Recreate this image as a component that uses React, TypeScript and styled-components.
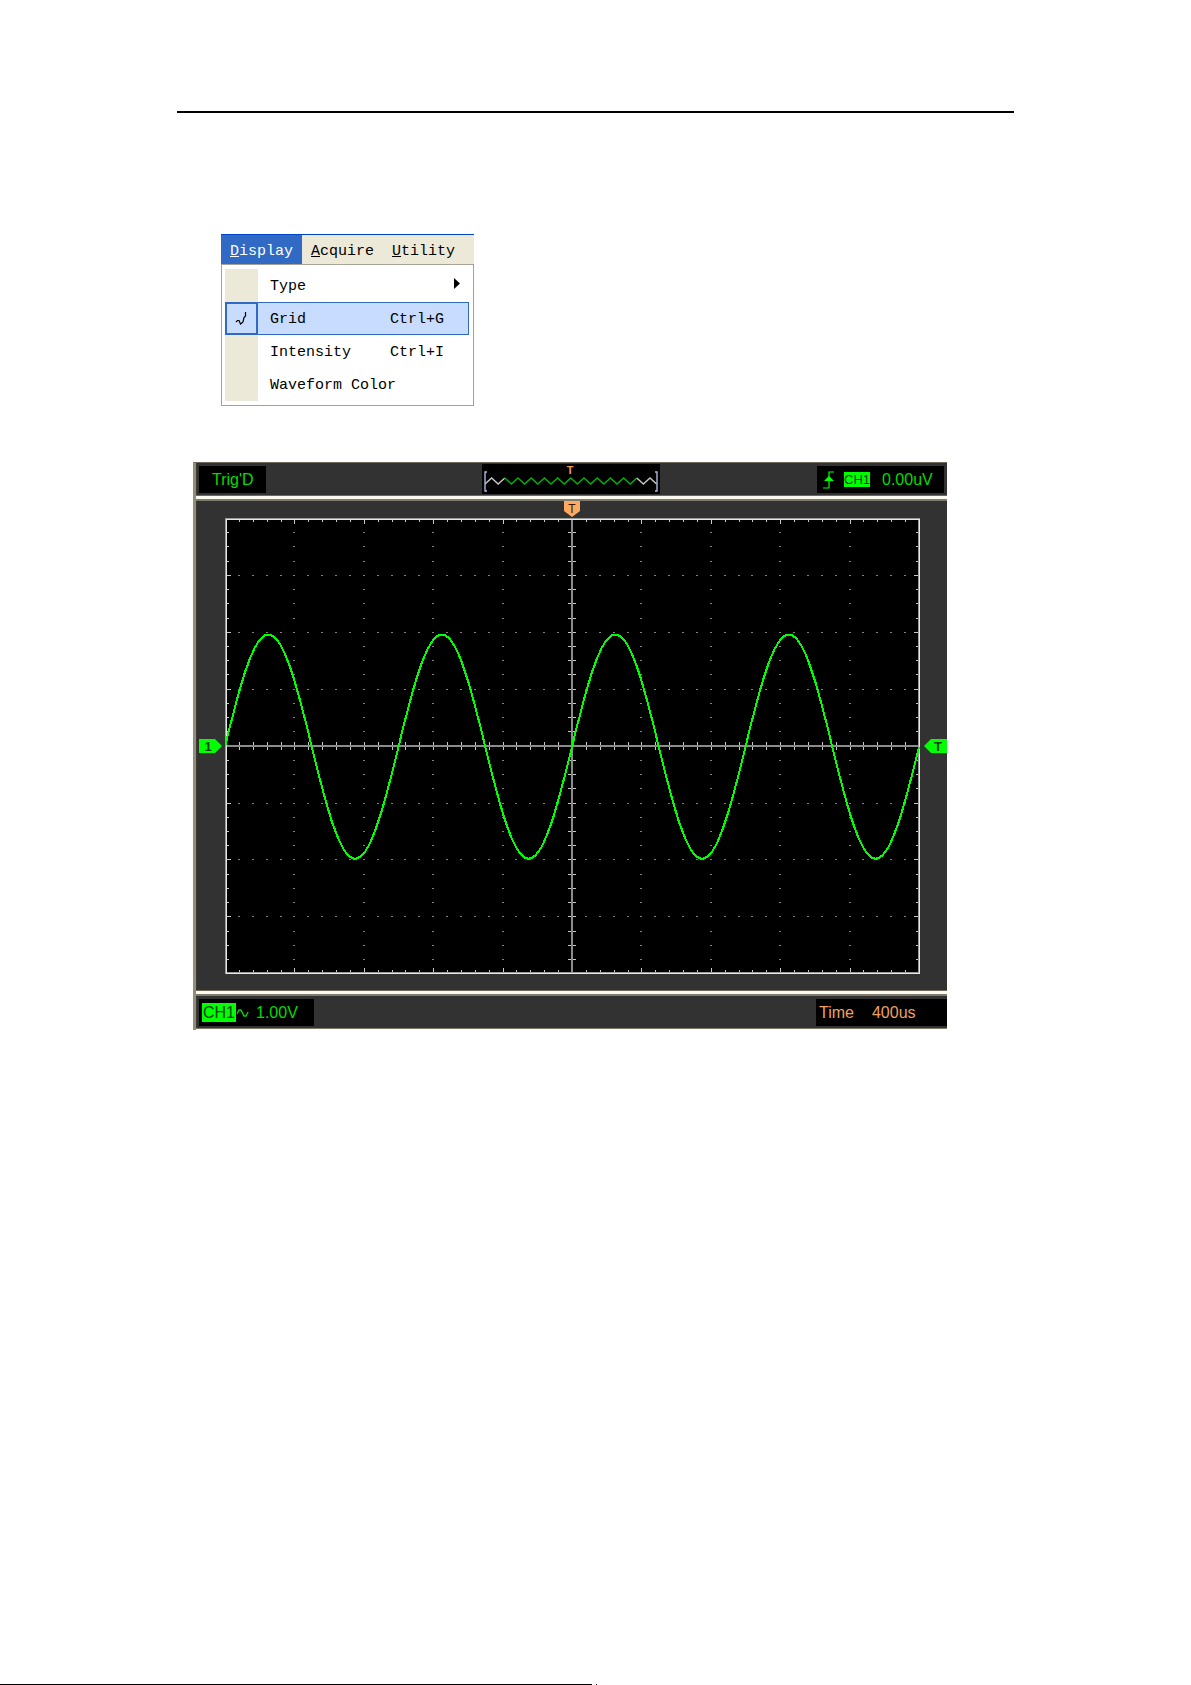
import React from "react";
import styled, { createGlobalStyle, css } from "styled-components";

const GlobalStyle = createGlobalStyle`
  * {
    box-sizing: border-box;
  }
  body {
    margin: 0;
    background: #fff;
    font-family: "Liberation Sans", Arial, sans-serif;
  }
`;

const GREEN = "#00ff00";
const ORANGE = "#ffa860";

const Page = styled.div`
  min-height: 100vh;
  display: flex;
  flex-direction: column;
`;

const Content = styled.main`
  padding: 111px 177px 0 177px;
`;

const Rule = styled.hr`
  margin: 0;
  border: 0;
  height: 2px;
  background: #000;
`;

const Footer = styled.footer`
  margin-top: auto;
  display: flex;
  gap: 4px;
`;

const FooterLine = styled.div`
  width: calc(50% - 4px);
  height: 1px;
  background: #000;
`;

const FooterDot = styled.div`
  width: 1px;
  height: 1px;
  background: #401018;
`;

/* ---------- menu ---------- */

const Menu = styled.nav`
  width: 253px;
  margin: 121px 0 0 44px;
`;

const MenuBar = styled.div`
  display: flex;
  height: 30px;
  border-top: 1px solid #0046c8;
  background: #ece9d8;
`;

const MenuButton = styled.button<{ $active?: boolean }>`
  border: 0;
  padding: 4px 9px 0 9px;
  background: ${(props) => (props.$active ? "#316ac5" : "transparent")};
  color: ${(props) => (props.$active ? "#fff" : "#000")};
  font: 15px "Liberation Mono", monospace;
`;

const Dropdown = styled.div`
  border: 1px solid #a5a294;
  padding: 4px 4px 4px 3px;
  background: #fff;
`;

const MenuRow = styled.button<{ $selected?: boolean }>`
  display: grid;
  grid-template-columns: 33px 1fr 79px;
  align-items: center;
  width: 100%;
  height: 33px;
  border: 0;
  padding: 0;
  background: transparent;
  color: #000;
  font: 15px "Liberation Mono", monospace;
  text-align: left;
  white-space: nowrap;
  ${(props) =>
    props.$selected &&
    css`
      background: #c8dcff;
      box-shadow: inset 0 0 0 1px #316ac5;
    `};
`;

const IconCell = styled.span<{ $selected?: boolean }>`
  display: flex;
  align-items: center;
  justify-content: center;
  height: 33px;
  background: #ece9d8;
  ${(props) =>
    props.$selected &&
    css`
      background: #c8dcff;
      border: 2px solid #316ac5;
    `};
`;

const RowLabel = styled.span`
  padding: 2px 0 0 12px;
`;

const Shortcut = styled.span`
  padding-top: 2px;
`;

const SubArrow = styled.span`
  display: flex;
  padding: 0 9px 4px 0;
  justify-content: flex-end;
`;

type menuRowType = {
  label: string;
  shortcut?: string;
  checked?: boolean;
  submenu?: boolean;
};

const menus = ["Display", "Acquire", "Utility"];

const rows: menuRowType[] = [
  { label: "Type", submenu: true },
  { label: "Grid", shortcut: "Ctrl+G", checked: true },
  { label: "Intensity", shortcut: "Ctrl+I" },
  { label: "Waveform Color" },
];

const DisplayMenu: React.FC = () => (
  <Menu>
    <MenuBar>
      {menus.map((name, i) => (
        <MenuButton key={name} $active={i === 0}>
          <u>{name[0]}</u>
          {name.slice(1)}
        </MenuButton>
      ))}
    </MenuBar>
    <Dropdown>
      {rows.map((row) => (
        <MenuRow key={row.label} $selected={row.checked}>
          <IconCell $selected={row.checked}>
            {row.checked && (
              <svg width="14" height="16" viewBox="0 0 14 16">
                <path
                  d="M1 11L2.5 9.5H4L5.5 13L8 11L9 6.5L10.5 5V1"
                  fill="none"
                  stroke="#000"
                  strokeWidth="1.2"
                />
              </svg>
            )}
          </IconCell>
          <RowLabel>{row.label}</RowLabel>
          {row.submenu ? (
            <SubArrow>
              <svg width="6" height="11" viewBox="0 0 6 11">
                <path d="M0 0 L6 5.5 L0 11 Z" fill="#000" />
              </svg>
            </SubArrow>
          ) : (
            <Shortcut>{row.shortcut}</Shortcut>
          )}
        </MenuRow>
      ))}
    </Dropdown>
  </Menu>
);

/* ---------- oscilloscope ---------- */

const Scope = styled.section`
  margin: 56px 67px 0 16px;
  border-left: 3px solid #918d7c;
  border-top: 1px solid #6e6b5d;
  background: #323232;
`;

const Divider = styled.div`
  height: 6px;
  border-top: 1px solid #6e6b5d;
  border-bottom: 2px solid #7f7b6c;
  background: #fbfaf0;
`;

const BottomEdge = styled.div`
  height: 2px;
  border-top: 1px solid #807c6c;
  background: #fbfaf0;
`;

const Bar = styled.div`
  display: grid;
  grid-template-columns: 1fr auto 1fr;
  align-items: center;
  height: 32px;
  padding-left: 2px;
  border-left: 1px solid #3f3c34;
`;

const Readout = styled.div<{ $color: string; $width: number; $end?: boolean }>`
  display: flex;
  align-items: center;
  width: ${(props) => props.$width}px;
  height: 27px;
  padding-top: 1px;
  background: #000;
  color: ${(props) => props.$color};
  font-size: 16px;
  white-space: nowrap;
  ${(props) =>
    props.$end &&
    css`
      grid-column: 3;
      justify-self: end;
    `};
`;

const Value = styled.span`
  padding-top: 1px;
`;

const TrigState = styled(Value)`
  padding-left: 13px;
`;

const TriggerReadout = styled(Readout)`
  margin-right: 3px;
  padding-left: 6px;
  gap: 10px;
`;

const ChannelReadout = styled(Readout)`
  padding-left: 3px;
`;

const TimeReadout = styled(Readout)`
  padding-left: 3px;
  gap: 18px;
`;

const ChannelTag = styled.span<{ $small?: boolean }>`
  padding: 0 1px;
  background: ${GREEN};
  color: #003c00;
  font-size: ${(props) => (props.$small ? 13 : 16)}px;
  line-height: ${(props) => (props.$small ? 15 : 19)}px;
  ${(props) =>
    props.$small &&
    css`
      padding: 0;
      margin-right: 2px;
    `};
`;

const Coupling = styled.svg`
  margin-right: 7px;
`;

const Preview = styled.svg`
  display: block;
  height: 30px;
  margin-right: 4px;
  background: #000;
`;

const Screen = styled.div`
  display: grid;
  grid-template-columns: 28px 1fr 27px;
  grid-template-rows: 17px auto 16px;
  align-items: center;
  border-left: 1px solid #3f3c34;

  svg {
    display: block;
  }
`;

const TriggerPosition = styled.svg`
  grid-column: 2;
  grid-row: 1;
  justify-self: center;
  margin-right: 2px;
`;

const ChannelMarker = styled.svg`
  grid-column: 1;
  grid-row: 2;
  margin-left: 2px;
`;

const LevelMarker = styled.svg`
  grid-column: 3;
  grid-row: 2;
  justify-self: end;
`;

const Plot = styled.svg`
  grid-column: 2;
  grid-row: 2;
  width: 100%;
  height: auto;
`;

// plot geometry: 10 x 8 divisions
const W = 695;
const H = 456;
const DIV_X = 69.4;
const DIV_Y = 56.9;
const CX = DIV_X * 5;
const CY = DIV_Y * 4;

const range = (n: number) => Array.from({ length: n }, (_, i) => i);

const gridX = range(51).map((i) => Math.round((i * DIV_X) / 5));
const gridY = range(33).map((i) => Math.round((i * DIV_Y) / 4));

const Graticule: React.FC = () => {
  const ticks: string[] = [];
  const dots: string[] = [];
  const cx = Math.round(CX);
  const cy = Math.round(CY);

  gridX.forEach((x, i) => {
    const len = i % 5 === 0 ? 6 : 4;
    ticks.push(`M${x} 0v${len}M${x} ${H}v${-len}M${x} ${cy - 4}v8`);
    if (i % 5 !== 0) {
      range(9).forEach((r) => dots.push(`M${x - 1} ${gridY[r * 4]}h2`));
    }
  });
  gridY.forEach((y, i) => {
    const len = i % 4 === 0 ? 6 : 4;
    ticks.push(`M0 ${y}h${len}M${W} ${y}h${-len}M${cx - 4} ${y}h8`);
    range(11).forEach((c) => dots.push(`M${gridX[c * 5] - 1} ${y}h2`));
  });

  return (
    <g fill="none" shapeRendering="crispEdges">
      <path d={dots.join("")} stroke="#808080" strokeWidth="1" />
      <path d={ticks.join("")} stroke="#c8c8c8" strokeWidth="1" />
      <path d={`M${cx} 0V${H}M0 ${cy}H${W}`} stroke="#8c8c8c" strokeWidth="2" />
      <rect x="1" y="1" width={W - 2} height={H - 2} stroke="#9a9a9a" strokeWidth="2" />
      <path d={`M1 ${H - 1}V1H${W - 1}V${H - 1}Z`} stroke="#e8e8e8" strokeWidth="1" />
    </g>
  );
};

const wave = range(W)
  .map((x) => {
    const y = CY + 1 - 112 * Math.sin((x / (DIV_X * 2.5)) * 2 * Math.PI);
    return `${x === 0 ? "M" : "L"}${x} ${Math.round(y)}`;
  })
  .join("");

const zigzag = (from: number, to: number) =>
  range(27)
    .map((i) => [3 + i * 6.6, i % 2 ? 14 : 20])
    .filter(([x]) => x >= from && x <= to)
    .map(([x, y], i) => `${i ? "L" : "M"}${x} ${y}`)
    .join("");

const App: React.FC = () => {
  return (
    <Page>
      <GlobalStyle />
      <Content>
        <Rule />
        <DisplayMenu />
        <Scope>
          <Bar>
            <Readout $color="#00dc00" $width={67}>
              <TrigState>Trig'D</TrigState>
            </Readout>
            <Preview width="178" viewBox="0 0 178 30">
              <g fill="none" strokeWidth="1.4">
                <path d={zigzag(0, 23)} stroke="#c8c8c8" />
                <path d={zigzag(22, 155)} stroke="#00b400" />
                <path d={zigzag(154, 175)} stroke="#c8c8c8" />
                <path d="M5 8H3V27H5M173 8H175V27H173" stroke="#a8b8e0" />
              </g>
              <text x="88" y="10" fontSize="11" fontWeight="bold" fill="#f09858" textAnchor="middle">
                T
              </text>
            </Preview>
            <TriggerReadout $color="#00dc00" $width={127} $end>
              <svg width="11" height="18" viewBox="0 0 11 18">
                <path d="M0 17H6V1H11" fill="none" stroke={GREEN} strokeWidth="1.2" />
                <path d="M1 10L6 5L11 10Z" fill={GREEN} />
              </svg>
              <ChannelTag $small>CH1</ChannelTag>
              <Value>0.00uV</Value>
            </TriggerReadout>
          </Bar>
          <Divider />
          <Screen>
            <TriggerPosition width="16" height="17" viewBox="0 0 16 17">
              <path d="M0 0H16V10L8 16L0 10Z" fill={ORANGE} />
              <text x="8" y="12" fontSize="12" fill="#301800" textAnchor="middle">
                T
              </text>
            </TriggerPosition>
            <ChannelMarker width="23" height="14" viewBox="0 0 23 14">
              <path d="M0 0H16L23 7L16 14H0Z" fill={GREEN} />
              <text x="9" y="12" fontSize="13" fontWeight="bold" fill="#003c00" textAnchor="middle">
                1
              </text>
            </ChannelMarker>
            <Plot viewBox={`0 0 ${W} ${H}`}>
              <rect width={W} height={H} fill="#000" />
              <Graticule />
              <path
                d={wave}
                fill="none"
                stroke={GREEN}
                strokeWidth="2"
                shapeRendering="crispEdges"
              />
            </Plot>
            <LevelMarker width="23" height="14" viewBox="0 0 23 14">
              <path d="M23 0H7L0 7L7 14H23Z" fill={GREEN} />
              <text x="14" y="12" fontSize="13" fontWeight="bold" fill="#003c00" textAnchor="middle">
                T
              </text>
            </LevelMarker>
          </Screen>
          <Divider />
          <Bar>
            <ChannelReadout $color="#00dc00" $width={115}>
              <ChannelTag>CH1</ChannelTag>
              <Coupling width="13" height="10" viewBox="0 0 13 10">
                <path
                  d="M1 6L3 2H5L8 8H10L12 4"
                  fill="none"
                  stroke="#00dc00"
                  strokeWidth="1.3"
                />
              </Coupling>
              <Value>1.00V</Value>
            </ChannelReadout>
            <TimeReadout $color="#f0a060" $width={131} $end>
              <Value>Time</Value>
              <Value>400us</Value>
            </TimeReadout>
          </Bar>
          <BottomEdge />
        </Scope>
      </Content>
      <Footer>
        <FooterLine />
        <FooterDot />
      </Footer>
    </Page>
  );
};

export default App;
